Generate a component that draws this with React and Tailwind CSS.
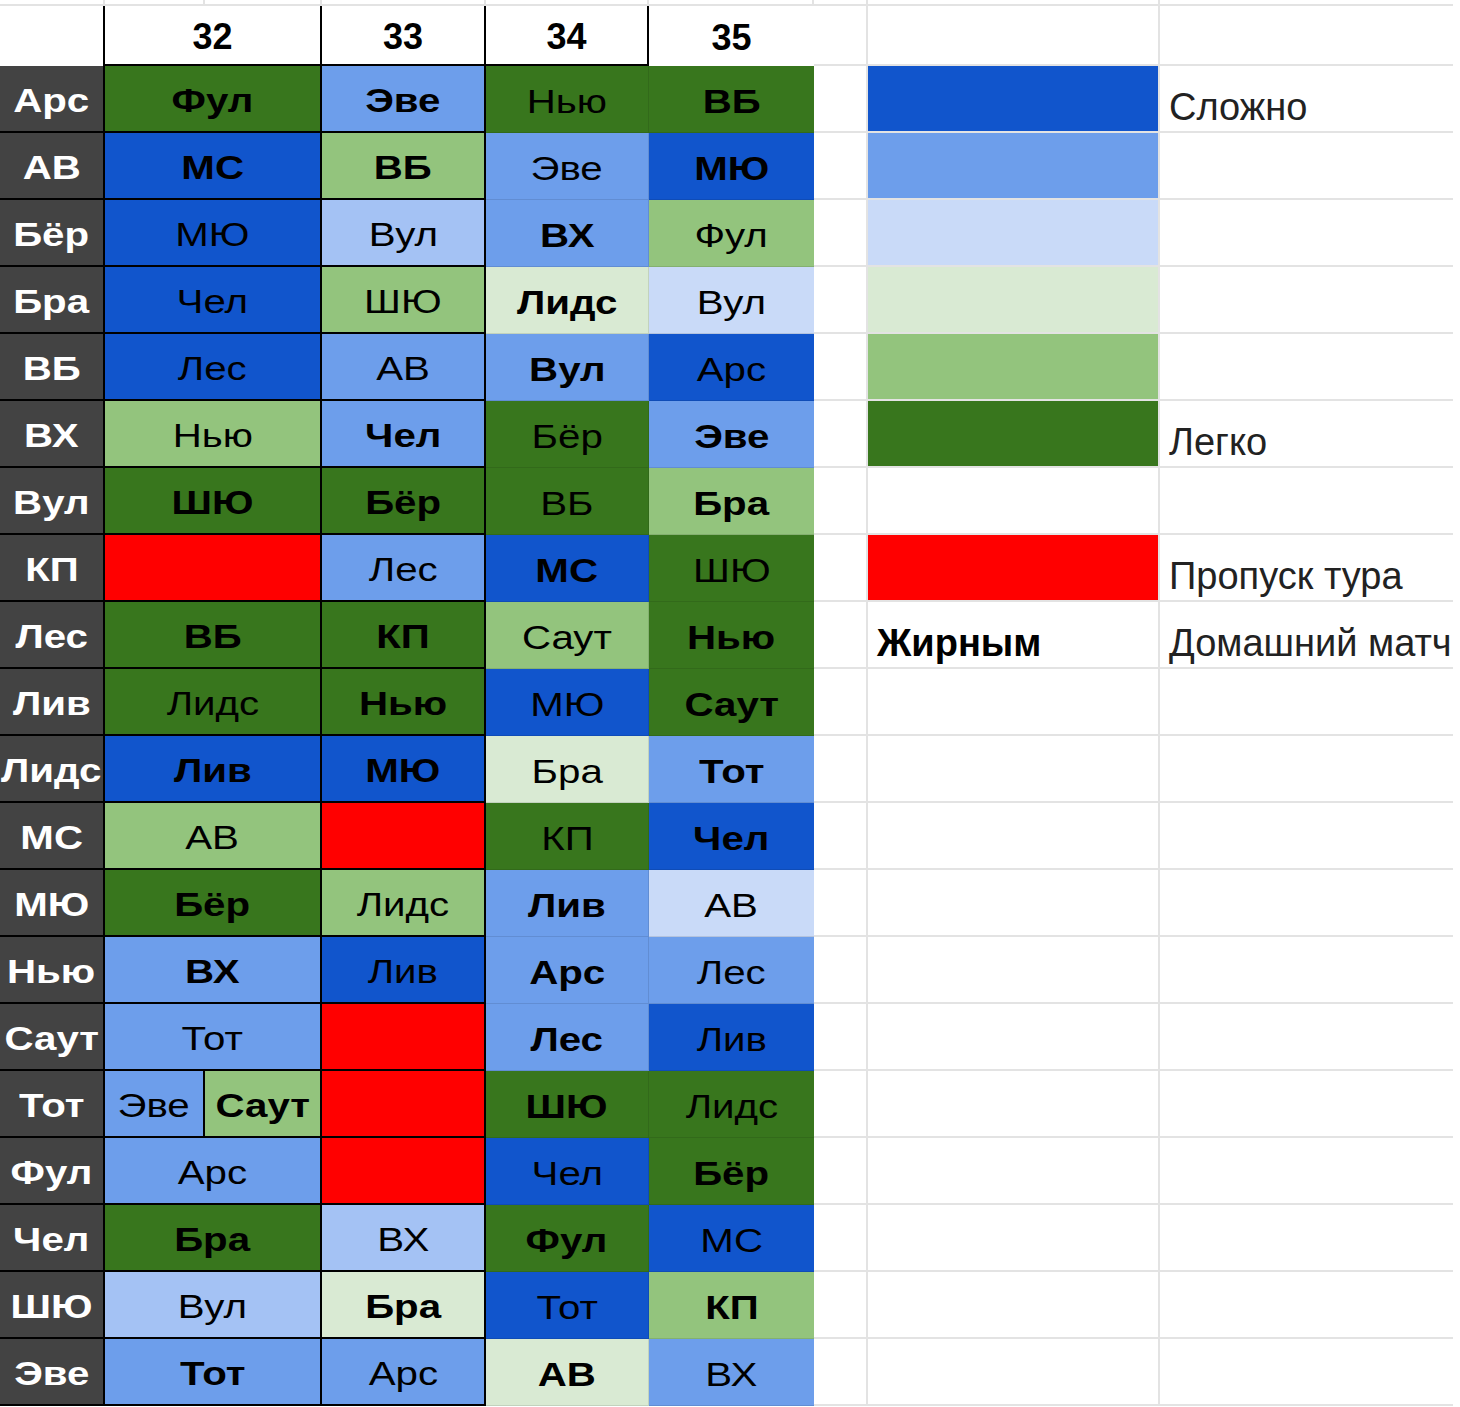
import React from "react";

const BG = {
    db: "bg-[#1155cc]",
    mb: "bg-[#6d9eeb]",
    lb: "bg-[#a4c2f4]",
    xb: "bg-[#c9daf8]",
    xg: "bg-[#d9ead3]",
    lg: "bg-[#93c47d]",
    dg: "bg-[#38761d]",
    rd: "bg-[#ff0000]",
};

// [label, col32, col33, col34, col35] -> [text, colour, bold]
const rows = [
    ["Арс", ["Фул", "dg", 1], ["Эве", "mb", 1], ["Нью", "dg", 0], ["ВБ", "dg", 1]],
    ["АВ", ["МС", "db", 1], ["ВБ", "lg", 1], ["Эве", "mb", 0], ["МЮ", "db", 1]],
    ["Бёр", ["МЮ", "db", 0], ["Вул", "lb", 0], ["ВХ", "mb", 1], ["Фул", "lg", 0]],
    ["Бра", ["Чел", "db", 0], ["ШЮ", "lg", 0], ["Лидс", "xg", 1], ["Вул", "xb", 0]],
    ["ВБ", ["Лес", "db", 0], ["АВ", "mb", 0], ["Вул", "mb", 1], ["Арс", "db", 0]],
    ["ВХ", ["Нью", "lg", 0], ["Чел", "mb", 1], ["Бёр", "dg", 0], ["Эве", "mb", 1]],
    ["Вул", ["ШЮ", "dg", 1], ["Бёр", "dg", 1], ["ВБ", "dg", 0], ["Бра", "lg", 1]],
    ["КП", ["", "rd", 0], ["Лес", "mb", 0], ["МС", "db", 1], ["ШЮ", "dg", 0]],
    ["Лес", ["ВБ", "dg", 1], ["КП", "dg", 1], ["Саут", "lg", 0], ["Нью", "dg", 1]],
    ["Лив", ["Лидс", "dg", 0], ["Нью", "dg", 1], ["МЮ", "db", 0], ["Саут", "dg", 1]],
    ["Лидс", ["Лив", "db", 1], ["МЮ", "db", 1], ["Бра", "xg", 0], ["Тот", "mb", 1]],
    ["МС", ["АВ", "lg", 0], ["", "rd", 0], ["КП", "dg", 0], ["Чел", "db", 1]],
    ["МЮ", ["Бёр", "dg", 1], ["Лидс", "lg", 0], ["Лив", "mb", 1], ["АВ", "xb", 0]],
    ["Нью", ["ВХ", "mb", 1], ["Лив", "db", 0], ["Арс", "mb", 1], ["Лес", "mb", 0]],
    ["Саут", ["Тот", "mb", 0], ["", "rd", 0], ["Лес", "mb", 1], ["Лив", "db", 0]],
    ["Тот", null, ["", "rd", 0], ["ШЮ", "dg", 1], ["Лидс", "dg", 0]],
    ["Фул", ["Арс", "mb", 0], ["", "rd", 0], ["Чел", "db", 0], ["Бёр", "dg", 1]],
    ["Чел", ["Бра", "dg", 1], ["ВХ", "lb", 0], ["Фул", "dg", 1], ["МС", "db", 0]],
    ["ШЮ", ["Вул", "lb", 0], ["Бра", "xg", 1], ["Тот", "db", 0], ["КП", "lg", 1]],
    ["Эве", ["Тот", "mb", 1], ["Арс", "mb", 0], ["АВ", "xg", 1], ["ВХ", "mb", 0]],
];

const legend = [
    { bg: "db", text: "Сложно" },
    { bg: "mb" },
    { bg: "xb" },
    { bg: "xg" },
    { bg: "lg" },
    { bg: "dg", text: "Легко" },
    {},
    { bg: "rd", text: "Пропуск тура" },
    { label: "Жирным", text: "Домашний матч" },
];

const Txt = ({ children, bold }) => (
    <span className={`inline-block scale-x-[1.22] text-[33px] leading-none text-black whitespace-nowrap ${bold ? "font-bold" : "font-normal"}`}>
        {children}
    </span>
);

const grid = "border-b-2 border-r-2 border-[#e3e3e3]";
const cell = "flex items-center justify-center pt-[4px]";

const App = () => {
    return (
        <div className="w-[1460px] h-[1407px] overflow-hidden bg-white font-['Liberation_Sans',Arial,sans-serif]">
            {/* strip of the row above */}
            <div className="flex h-[6px]">
                <div className={`w-[105px] ${grid}`} />
                <div className={`w-[100px] ${grid}`} />
                <div className={`w-[117px] ${grid}`} />
                <div className={`w-[164px] ${grid}`} />
                <div className={`w-[163px] ${grid}`} />
                <div className={`w-[165px] ${grid}`} />
                <div className={`w-[54px] ${grid}`} />
                <div className={`w-[292px] ${grid}`} />
                <div className="w-[293px] border-b-2 border-[#e3e3e3]" />
            </div>

            {/* header */}
            <div className="flex h-[60px] text-[36px] font-bold text-black">
                <div className="w-[105px] border-r-2 border-black" />
                <div className={`w-[217px] ${cell} border-r-2 border-b-2 border-black`}>32</div>
                <div className={`w-[164px] ${cell} border-r-2 border-b-2 border-black`}>33</div>
                <div className={`w-[163px] ${cell} border-r-2 border-b-2 border-black`}>34</div>
                <div className={`w-[165px] ${cell}`}>35</div>
                <div className={`w-[54px] ${grid}`} />
                <div className={`w-[292px] ${grid}`} />
                <div className="w-[293px] border-b-2 border-[#e3e3e3]" />
            </div>

            {rows.map(([label, c32, c33, c34, c35], i) => {
                const lg = legend[i] || {};
                return (
                    <div key={label} className="flex h-[67px]">
                        <div className={`w-[105px] ${cell} overflow-hidden bg-[#434343] border-r-2 border-b-2 border-black`}>
                            <span className="inline-block scale-x-[1.22] text-[33px] leading-none font-bold text-white whitespace-nowrap">
                                {label}
                            </span>
                        </div>

                        {c32 ? (
                            <div className={`w-[217px] ${cell} border-r-2 border-b-2 border-black ${BG[c32[1]]}`}>
                                <Txt bold={c32[2]}>{c32[0]}</Txt>
                            </div>
                        ) : (
                            <div className="w-[217px] flex">
                                <div className={`w-[100px] ${cell} border-r-2 border-b-2 border-black ${BG.mb}`}>
                                    <Txt>Эве</Txt>
                                </div>
                                <div className={`w-[117px] ${cell} border-r-2 border-b-2 border-black ${BG.lg}`}>
                                    <Txt bold>Саут</Txt>
                                </div>
                            </div>
                        )}

                        <div className={`w-[164px] ${cell} border-r-2 border-b-2 border-black ${BG[c33[1]]}`}>
                            <Txt bold={c33[2]}>{c33[0]}</Txt>
                        </div>
                        <div className={`w-[163px] ${cell} border-r border-b border-black/10 ${BG[c34[1]]}`}>
                            <Txt bold={c34[2]}>{c34[0]}</Txt>
                        </div>
                        <div className={`w-[165px] ${cell} border-b border-black/10 ${BG[c35[1]]}`}>
                            <Txt bold={c35[2]}>{c35[0]}</Txt>
                        </div>

                        <div className={`w-[54px] ${grid}`} />
                        <div className={`w-[292px] flex items-end pl-[9px] pb-[5px] ${grid} ${lg.bg ? BG[lg.bg] : ""}`}>
                            {lg.label && (
                                <span className="text-[38px] leading-none font-bold text-black whitespace-nowrap">{lg.label}</span>
                            )}
                        </div>
                        <div className="w-[293px] flex items-end pl-[9px] pb-[5px] overflow-hidden border-b-2 border-[#e3e3e3]">
                            {lg.text && (
                                <span className="text-[38px] leading-none text-[#222] whitespace-nowrap">{lg.text}</span>
                            )}
                        </div>
                    </div>
                );
            })}
        </div>
    );
};

export default App;
